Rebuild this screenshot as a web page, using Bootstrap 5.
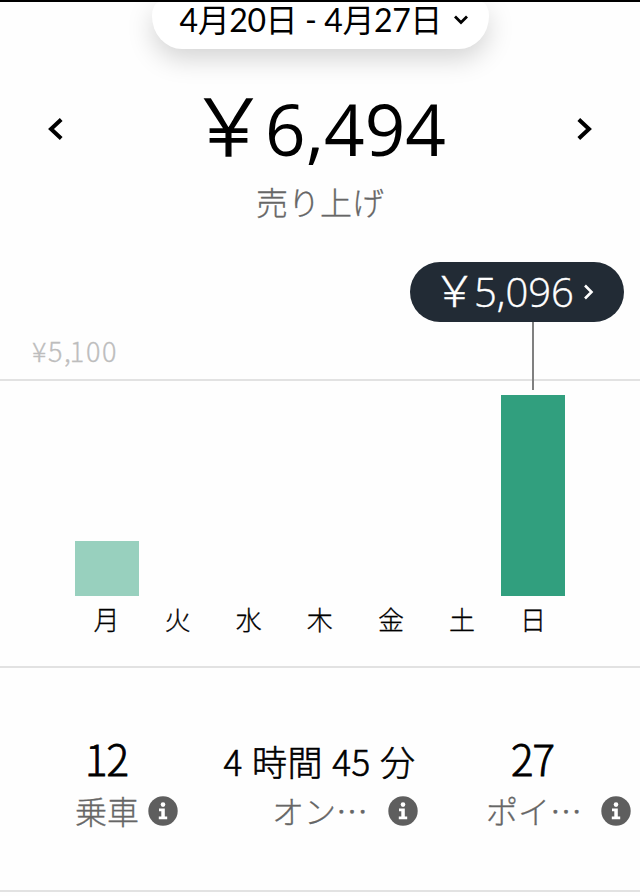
<!DOCTYPE html>
<html lang="ja">
<head>
<meta charset="utf-8">
<meta name="viewport" content="width=device-width, initial-scale=1">
<title>売り上げ</title>
<link href="https://cdn.jsdelivr.net/npm/bootstrap@5.3.0/dist/css/bootstrap.min.css" rel="stylesheet">
<style>
body{font-family:"Noto Sans CJK JP",sans-serif;color:#000;background:#fefefe;width:640px;height:896px;overflow:hidden;font-weight:400}
.screen{height:896px;border-top:2px solid #000}
.latin{font-family:"Open Sans","Noto Sans CJK JP",sans-serif}
.thin{font-weight:300;-webkit-text-stroke:.3px currentColor}
.topbar{height:86px;overflow:hidden}
.period{font-family:Lato,"Noto Sans CJK JP",sans-serif;width:337px;height:47px;border-radius:8px 8px 30px 30px / 14px 14px 33px 33px;padding:0 0 0 28px;background:#fff;box-shadow:0 10px 26px rgba(0,0,0,.17);font-size:32px;line-height:35px;letter-spacing:-.4px}
.period svg{margin:0 0 12px 11px}
.total{height:82px;padding:0 48px}
.amount{font-size:71px;line-height:68px;height:82px;white-space:nowrap;padding-left:4px}
.yen{font-family:"Noto Sans CJK JP",sans-serif;line-height:1}
.amount .yen{font-size:79px;line-height:68px;margin:0 -3px 0 -9px;font-weight:300;-webkit-text-stroke:1.5px currentColor}
.caption{height:66px;font-size:32px;line-height:62px;color:#666}
.chart{height:432px;border-bottom:2px solid #e2e2e2}
.tipline{height:60px;margin-top:26px;padding-right:16px}
.tip{width:214px;height:60px;border-radius:30px;background:#222b35;color:#fff;font-size:40px;line-height:60px;padding-left:23px;font-weight:300}
.tip-text{height:60px;-webkit-text-stroke:.4px #fff}
.tip .yen{font-size:43px;margin-right:-2px}
.tip svg{margin-left:9px}
.scale{height:59px;border-bottom:2px solid #e2e2e2;padding:0 0 0 32px;font-size:27px;line-height:57px;color:#bdbdbd;letter-spacing:1.6px}
.comma{letter-spacing:-1px}
.stem{width:2px;height:68px;background:#808080;left:532px;top:0}
.plot{height:215px;padding:0 71px}
.slot{width:71.1px}
.bar{width:64px;background:#98d0be}
.bar.on{background:#319f7e}
.days{padding:0 71px;font-size:26px;line-height:46px}
.stats{height:224px;border-bottom:2px solid #e2e2e2;padding-top:66px}
.stat{width:213px}
.figure-num{height:52px;line-height:48px;font-size:42px;letter-spacing:-1px;font-weight:300;-webkit-text-stroke:.8px #000}
.figure-num.duration{font-size:35px;line-height:53px;letter-spacing:.5px;word-spacing:1px;-webkit-text-stroke-width:.6px}
.note{height:50px;line-height:50px;font-size:32px;color:#666}
.note span{margin-top:-2px}
.info{width:30px;height:30px}
.rides{padding-left:75px;gap:9px}
.online{padding-left:59px;gap:20px}
.points{padding-left:60px;gap:19px}
</style>
</head>
<body>
<main class="screen d-flex flex-column">
  <header class="topbar d-flex justify-content-center flex-shrink-0">
    <div class="period d-flex align-items-start text-nowrap"><span>4月20日 - 4月27日</span><svg class="align-self-center" width="16" height="12" viewBox="0 0 16 12"><path d="M2 2.5 8 8.5 14 2.5" fill="none" stroke="#000" stroke-width="2.8"/></svg></div>
  </header>
  <section class="total d-flex justify-content-between align-items-center flex-shrink-0">
    <svg width="15" height="24" viewBox="0 0 15 24"><path d="M13.2 2.5 3 12 13.2 21.5" fill="none" stroke="#000" stroke-width="4"/></svg>
    <div class="amount latin"><span class="yen">￥</span>6,494</div>
    <svg width="15" height="24" viewBox="0 0 15 24"><path d="M1.8 2.5 12 12 1.8 21.5" fill="none" stroke="#000" stroke-width="4"/></svg>
  </section>
  <div class="caption thin text-center flex-shrink-0">売り上げ</div>
  <section class="chart flex-shrink-0">
    <div class="tipline d-flex justify-content-end"><div class="tip latin d-flex align-items-center text-nowrap"><span class="tip-text"><span class="yen">￥</span>5,096</span><svg width="12" height="18" viewBox="0 0 12 18"><path d="M2 2.5 8.5 9 2 15.5" fill="none" stroke="#fff" stroke-width="2.6"/></svg></div></div>
    <div class="scale thin position-relative">¥5<span class="comma">,</span>100<span class="stem position-absolute"></span></div>
    <div class="plot d-flex align-items-end">
      <div class="slot d-flex justify-content-center"><div class="bar" style="height:55px"></div></div>
      <div class="slot"></div><div class="slot"></div><div class="slot"></div><div class="slot"></div><div class="slot"></div>
      <div class="slot d-flex justify-content-center"><div class="bar on" style="height:201px"></div></div>
    </div>
    <div class="days thin d-flex text-center"><div class="slot">月</div><div class="slot">火</div><div class="slot">水</div><div class="slot">木</div><div class="slot">金</div><div class="slot">土</div><div class="slot">日</div></div>
  </section>
  <section class="stats d-flex flex-shrink-0">
    <div class="stat"><div class="figure-num text-center">12</div>
      <div class="note thin rides d-flex align-items-center text-nowrap"><span>乗車</span><svg class="info flex-shrink-0" viewBox="0 0 30 30"><circle cx="15" cy="15" r="14.7" fill="#5e5e5e"/><circle cx="15" cy="8.6" r="2.3" fill="#fff"/><path d="M11 12.5h5.8v8.1h2.4v2.7h-8.4v-2.7h2.5v-5.4H11z" fill="#fff"/></svg></div></div>
    <div class="stat"><div class="figure-num duration text-center text-nowrap">4 時間 45 分</div>
      <div class="note thin online d-flex align-items-center text-nowrap"><span>オン…</span><svg class="info flex-shrink-0" viewBox="0 0 30 30"><circle cx="15" cy="15" r="14.7" fill="#5e5e5e"/><circle cx="15" cy="8.6" r="2.3" fill="#fff"/><path d="M11 12.5h5.8v8.1h2.4v2.7h-8.4v-2.7h2.5v-5.4H11z" fill="#fff"/></svg></div></div>
    <div class="stat"><div class="figure-num text-center">27</div>
      <div class="note thin points d-flex align-items-center text-nowrap"><span>ポイ…</span><svg class="info flex-shrink-0" viewBox="0 0 30 30"><circle cx="15" cy="15" r="14.7" fill="#5e5e5e"/><circle cx="15" cy="8.6" r="2.3" fill="#fff"/><path d="M11 12.5h5.8v8.1h2.4v2.7h-8.4v-2.7h2.5v-5.4H11z" fill="#fff"/></svg></div></div>
  </section>
</main>
<script src="https://cdn.jsdelivr.net/npm/bootstrap@5.3.0/dist/js/bootstrap.bundle.min.js"></script>
</body>
</html>
